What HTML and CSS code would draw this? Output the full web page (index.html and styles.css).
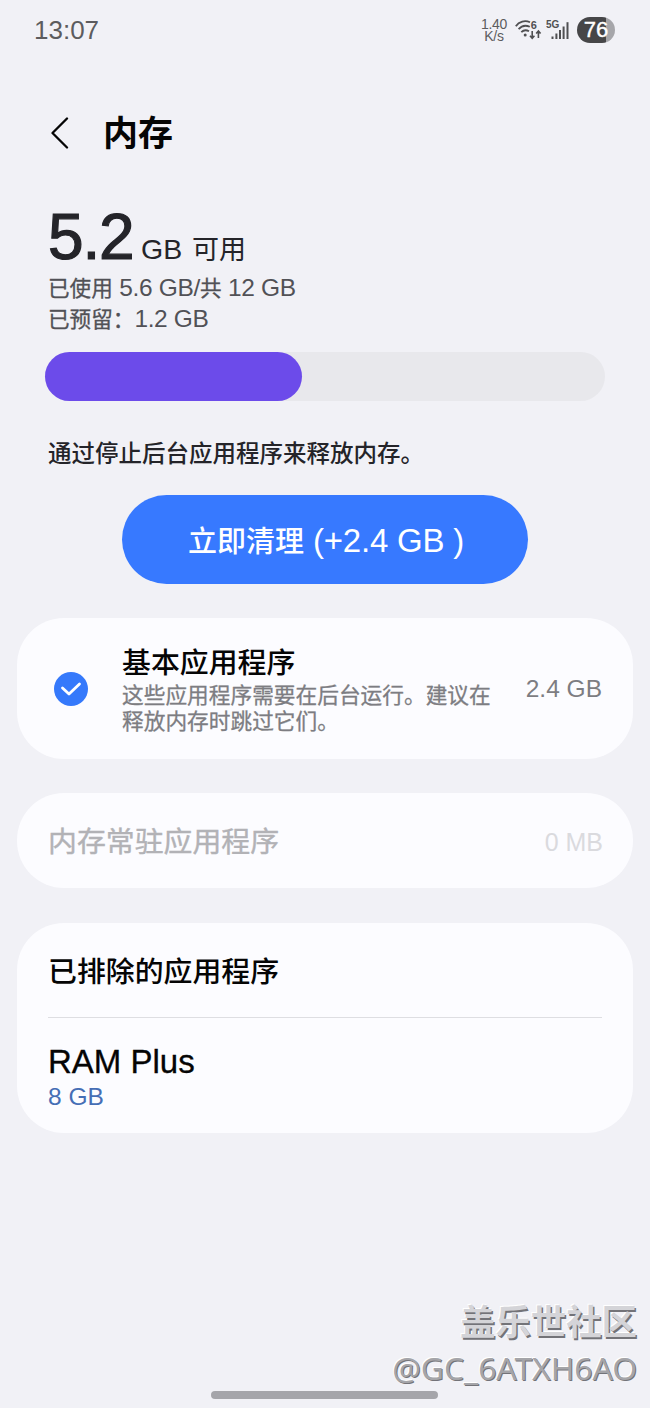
FILE: index.html
```
<!DOCTYPE html>
<html lang="zh-CN">
<head>
<meta charset="utf-8">
<title>内存</title>
<link rel="stylesheet" href="styles.css">
</head>
<body>
<div class="screen">
  <div class="status-bar">
    <span class="clock">13:07</span>
    <div class="status-icons">
      <div class="speed"><span>1.40</span><span>K/s</span></div>
      <svg class="wifi" width="28" height="24" viewBox="0 0 28 24" fill="none" stroke="#505052" stroke-width="1.8">
        <path d="M.8 8.200C4 3.500 10 2 15 4.300M3.600 11.200C6.500 7.800 10.500 6.800 14.800 8.800M6.300 14.200C8.500 12 11.500 11.800 14 13.300"/>
        <circle cx="10.200" cy="17" r="1.500" fill="#505052" stroke="none"/>
        <path d="M17.200 13v7M15 17.800l2.200 2.500 2.200-2.500M23.400 20v-7M21.200 15.500l2.200-2.500 2.200 2.500" stroke-width="1.600"/>
        <text x="15.800" y="10.500" class="wifi-gen">6</text>
      </svg>
      <svg class="signal" width="25" height="24" viewBox="0 0 25 24" fill="#505052">
        <text x="0" y="10.300" class="network">5G</text>
        <rect x="5.500" y="18.500" width="2" height="2.500"/>
        <rect x="9.400" y="15.500" width="2" height="5.500"/>
        <rect x="13" y="12" width="2" height="9"/>
        <rect x="16.600" y="8.500" width="2" height="12.500"/>
        <rect x="20.500" y="4.200" width="2" height="16.800"/>
      </svg>
      <div class="battery">76</div>
    </div>
  </div>

  <header class="title-bar">
    <svg width="20" height="32" viewBox="0 0 20 32" fill="none" stroke="#050505" stroke-width="2.300" stroke-linecap="round" stroke-linejoin="round"><path d="M17 1.500L2.500 16L17 30.500"/></svg>
    <h1>内存</h1>
  </header>

  <section class="summary">
    <div class="available"><span class="amount">5.2</span><span class="unit">GB</span><span class="free">可用</span></div>
    <div class="usage"><span class="cn">已使用</span> 5.6 GB/<span class="cn">共</span> 12 GB</div>
    <div class="usage"><span class="cn">已预留：</span><span class="reserved">1.2 GB</span></div>
  </section>
  <div class="meter"><div class="meter-fill"></div></div>
  <p class="hint">通过停止后台应用程序来释放内存。</p>
  <button class="clean"><span class="clean-label">立即清理</span><span class="clean-size">(+2.4 GB )</span></button>

  <section class="card basic">
    <svg class="check" width="34" height="34" viewBox="0 0 34 34"><circle cx="17" cy="17" r="17" fill="#3579fb"/><path d="M8.500 16L15 22L25.500 12" fill="none" stroke="#fff" stroke-width="2.800" stroke-linecap="round" stroke-linejoin="round"/></svg>
    <div class="basic-text">
      <h2>基本应用程序</h2>
      <p>这些应用程序需要在后台运行。建议在<br>释放内存时跳过它们。</p>
    </div>
    <span class="size">2.4 GB</span>
  </section>
  <section class="card resident">
    <h2>内存常驻应用程序</h2>
    <span class="size">0 MB</span>
  </section>
  <section class="card options">
    <div class="excluded"><h2>已排除的应用程序</h2></div>
    <div class="ram">
      <div class="ram-title">RAM Plus</div>
      <div class="ram-size">8 GB</div>
    </div>
  </section>

  <footer class="watermark">
    <div class="community">盖乐世社区</div>
    <div class="user">@GC_6ATXH6AO</div>
  </footer>
  <div class="home-bar"></div>
</div>
</body>
</html>
```
FILE: styles.css
```
* { box-sizing: border-box; }
body, h1, h2, p { margin: 0; }
body {
  background: #f1f1f6;
  color: #050505;
  font-family: "Liberation Sans", "Noto Sans CJK SC", sans-serif;
}
.screen {
  width: 650px;
  height: 1408px;
  overflow: hidden;
  display: flex;
  flex-direction: column;
}
.status-bar {
  height: 60px;
  padding: 0 35px 0 34px;
  display: flex;
  justify-content: space-between;
  color: #5c5c5e;
}
.clock { font-size: 26px; line-height: 60px; }
.status-icons { display: flex; align-items: center; height: 60px; }
.speed {
  width: 28px;
  margin-right: 7px;
  display: flex;
  flex-direction: column;
  align-items: center;
  font-size: 14px;
  line-height: 12px;
  letter-spacing: -0.3px;
}
.wifi { margin-right: 3px; }
.wifi-gen { font: bold 11px "Liberation Sans", sans-serif; fill: #505052; stroke: none; }
.network { font: bold 10px "Liberation Sans", sans-serif; }
.signal { margin-right: 6px; }
.battery {
  width: 38px;
  height: 26px;
  border-radius: 13px;
  background: linear-gradient(90deg, #464648 76%, #a6a6aa 76%);
  color: #fff;
  font-size: 22px;
  line-height: 26px;
  text-align: center;
  -webkit-text-stroke: 0.4px #fff;
}
.title-bar {
  height: 145px;
  padding: 0 0 0 50px;
  display: flex;
  align-items: center;
  gap: 33px;
}
.title-bar h1 { font-size: 35px; line-height: 50px; font-weight: 700; padding-top: 2px; }
.summary { padding-left: 48px; height: 147px; color: #242429; }
.available { height: 68px; line-height: 64px; display: flex; align-items: baseline; }
.amount { font-size: 64px; -webkit-text-stroke: 1.2px #242429; width: 93px; letter-spacing: -1.2px; }
.unit { font-size: 28.5px; width: 51px; }
.free { font-size: 27px; }
.usage { font-size: 24.5px; line-height: 30px; color: #515156; white-space: nowrap; letter-spacing: -0.35px; }
.cn { font-size: 21.6px; letter-spacing: 0; -webkit-text-stroke: 0.3px #515156; }
.meter { width: 560px; height: 49px; margin-left: 45px; border-radius: 25px; background: #e8e8ec; }
.meter-fill { width: 257px; height: 49px; border-radius: 25px; background: #6c4bea; }
.hint {
  margin: 36px 0 24px 48px;
  font-size: 23.5px;
  line-height: 34px;
  font-weight: 500;
  color: #242429;
}
.clean {
  width: 406px;
  height: 89px;
  margin-left: 122px;
  padding: 1px 0 0 2px;
  border: 0;
  border-radius: 45px;
  background: #3779ff;
  color: #fff;
  display: flex;
  align-items: baseline;
  justify-content: center;
  gap: 9px;
  font: 33px/89px "Liberation Sans", "Noto Sans CJK SC", sans-serif;
}
.clean-label { font-size: 29px; font-weight: 500; }
.clean-size { letter-spacing: -0.2px; }
.card { width: 616px; margin-left: 17px; background: #fcfcff; border-radius: 47px; }
.card h2 { font-size: 28.9px; font-weight: 500; line-height: 40px; }
.size { font-size: 24.5px; line-height: 30px; padding-top: 1px; color: #7d7d82; }
.basic {
  height: 141px;
  margin-top: 34px;
  padding: 0 31px 0 37px;
  display: flex;
  align-items: center;
}
.basic-text { margin-left: 34px; padding-top: 1px; flex: 1; white-space: nowrap; }
.basic-text p { font-size: 21.7px; line-height: 26px; color: #7d7d82; -webkit-text-stroke: 0.3px #7d7d82; }
.resident {
  height: 95px;
  margin-top: 34px;
  padding: 2px 30px 0 31px;
  display: flex;
  align-items: center;
  justify-content: space-between;
}
.resident h2 { color: #b2b2b6; font-weight: 400; -webkit-text-stroke: 0.4px #b2b2b6; padding-top: 1px; }
.resident .size { color: #dadade; font-size: 25px; }
.options { height: 210px; margin-top: 35px; padding: 0 31px; }
.excluded { height: 95px; padding-top: 3px; border-bottom: 1px solid #dedee2; display: flex; align-items: center; }
.ram { padding-top: 25px; }
.ram-title { font-size: 33px; line-height: 38px; -webkit-text-stroke: 0.3px #050505; }
.ram-size { font-size: 24.5px; line-height: 32px; color: #456eb5; }
.watermark {
  margin-top: 167px;
  padding-right: 13px;
  text-align: right;
  color: #d4d4d8;
  text-shadow: 1px 1px 0 #737378, -1px -1px 0 #fff;
}
.community { font-size: 35.4px; line-height: 46px; font-weight: 700; text-shadow: 1.5px 1.5px 0 #737378, -1px -1px 0 #fff; }
.user { font-family: "Noto Sans", sans-serif; font-size: 31.8px; line-height: 44px; color: #a5a5a9; }
.home-bar { width: 227px; height: 8px; margin: 1px 0 0 211px; border-radius: 4px; background: #a5a5aa; }
```
